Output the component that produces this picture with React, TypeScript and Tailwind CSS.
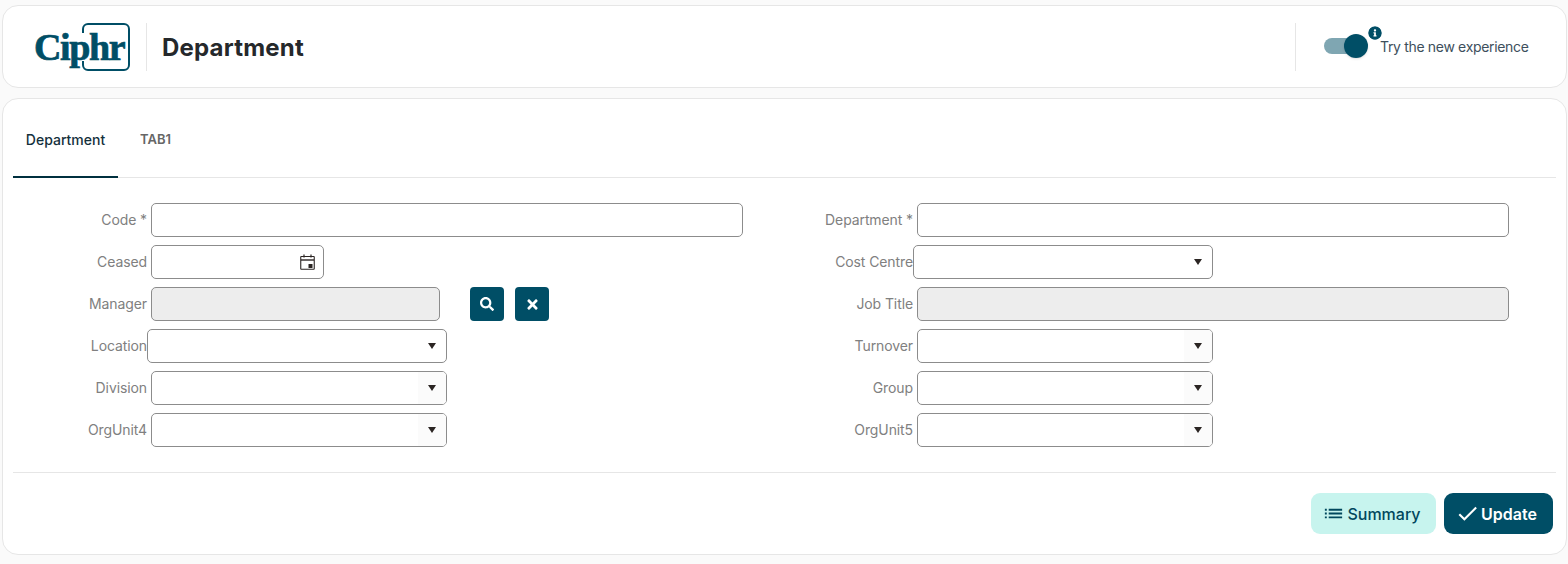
import { FaInfoCircle, FaSearch, FaTimes } from 'react-icons/fa';
import { MdCheck, MdList } from 'react-icons/md';

const FIELD = 'h-[34px] rounded-[5px] border border-[#8c8c8c] bg-white outline-none';

function Arrow() {
  return (
    <svg className="absolute right-[10px] top-[13px] h-[6px] w-[8px] text-[#2b2523]" viewBox="0 0 8 6" aria-hidden="true">
      <path d="M0 0h8L4 6z" fill="currentColor" />
    </svg>
  );
}

function CalendarIcon() {
  return (
    <svg className="h-[16px] w-[15px] text-[#2b2523]" viewBox="0 0 15 16" fill="none" stroke="currentColor" aria-hidden="true">
      <rect x="0.75" y="2.5" width="13.5" height="12.75" rx="0.5" strokeWidth="1.1" />
      <path d="M1 6h13" strokeWidth="1.4" />
      <path d="M4 0.5v3M11 0.5v3" strokeWidth="1.2" />
      <rect x="8.5" y="10" width="4" height="4" fill="currentColor" stroke="none" />
    </svg>
  );
}

function Select({ className, shaded }: { className: string; shaded?: boolean }) {
  return (
    <div className={`relative overflow-hidden ${FIELD} ${className}`}>
      {shaded && <div className="absolute inset-y-0 right-0 w-[28px] bg-[#fbfbfb]" />}
      <Arrow />
    </div>
  );
}

function Row({ label, children }: { label: string; children: React.ReactNode }) {
  return (
    <div className="flex h-[34px] items-center">
      <label className="w-[134px] shrink-0 pb-[2px] text-right text-[14px] tracking-[-0.1px] text-[#808080]">{label}</label>
      {children}
    </div>
  );
}

function Logo() {
  return (
    <div className="relative h-[48px] w-[95px]">
      <svg className="absolute left-[47px] top-0 h-[48px] w-[48px] text-[#004e66]" viewBox="0 0 48 48" fill="none" aria-hidden="true">
        <path d="M1 10V6a5 5 0 0 1 5-5h36a5 5 0 0 1 5 5v36a5 5 0 0 1-5 5H6a5 5 0 0 1-5-5v-4" stroke="currentColor" strokeWidth="2" />
      </svg>
      <span className="absolute -left-px top-0 font-['Liberation_Serif',serif] text-[38px] font-bold leading-[48px] tracking-[-1.4px] text-[#004e66] [-webkit-text-stroke:0.7px_#004e66]">
        Ciphr
      </span>
    </div>
  );
}

export default function App() {
  return (
    <div className="h-[564px] w-[1568px] overflow-hidden bg-[#fafafa] pl-[2px] pr-px pt-[5px] font-['Inter',sans-serif]">
      <header className="flex h-[83px] items-center rounded-[16px] border border-[#e6e6e6] bg-white pl-[32px] pr-[36px]">
        <Logo />
        <div className="ml-[16px] h-[48px] w-px bg-[#e6e6e6]" />
        <h1 className="ml-[15px] pt-[2px] text-[24px] font-bold tracking-[0.2px] text-[#25282b]">Department</h1>
        <div className="ml-auto h-[48px] w-px bg-[#e6e6e6]" />
        <div className="relative ml-[28px] h-[48px] w-[206px]">
          <div className="absolute left-0 top-[15px] h-[16px] w-[36px] rounded-full bg-[#7fa6b2]" />
          <div className="absolute left-[20px] top-[11px] h-[24px] w-[24px] rounded-full bg-[#004e66] shadow-sm" />
          <FaInfoCircle className="absolute left-[44px] top-[3px] h-[14px] w-[14px] rounded-full bg-white text-[#004e66]" />
          <span className="absolute left-[56px] top-[13px] whitespace-nowrap text-[14px] tracking-[-0.33px] text-[#3d4f5c]">
            Try the new experience
          </span>
        </div>
      </header>

      <main className="mt-[10px] h-[457px] rounded-[16px] border border-[#e6e6e6] bg-white px-[10px]">
        <nav className="flex h-[79px] border-b border-[#e6e6e6]">
          <div className="flex h-[79px] w-[105px] items-center justify-center border-b-2 border-[#00303f] pt-[3px] text-[14px] font-medium text-[#14303c]">
            Department
          </div>
          <div className="ml-[22px] flex h-[79px] items-center pt-[3px] text-[13px] font-semibold text-[#666666]">TAB1</div>
        </nav>

        <section className="mt-[25px] flex">
          <div className="flex w-[766px] flex-col gap-[8px]">
            <Row label="Code *">
              <input className={`ml-[4px] w-[592px] ${FIELD}`} />
            </Row>
            <Row label="Ceased">
              <div className={`relative ml-[4px] flex w-[173px] items-center justify-end pr-[8px] ${FIELD}`}>
                <CalendarIcon />
              </div>
            </Row>
            <Row label="Manager">
              <input disabled className={`ml-[4px] w-[289px] ${FIELD} !bg-[#ededed]`} />
              <button className="ml-[30px] flex h-[34px] w-[34px] items-center justify-center rounded-[4px] bg-[#004e66] text-white">
                <FaSearch className="h-[14px] w-[14px]" />
              </button>
              <button className="ml-[11px] flex h-[34px] w-[34px] items-center justify-center rounded-[4px] bg-[#004e66] text-white">
                <FaTimes className="h-[15px] w-[15px]" />
              </button>
            </Row>
            <Row label="Location">
              <Select className="w-[300px]" />
            </Row>
            <Row label="Division">
              <Select className="ml-[4px] w-[296px]" shaded />
            </Row>
            <Row label="OrgUnit4">
              <Select className="ml-[4px] w-[296px]" shaded />
            </Row>
          </div>
          <div className="flex flex-col gap-[8px]">
            <Row label="Department *">
              <input className={`ml-[4px] w-[592px] ${FIELD}`} />
            </Row>
            <Row label="Cost Centre">
              <Select className="w-[300px]" />
            </Row>
            <Row label="Job Title">
              <input disabled className={`ml-[4px] w-[592px] ${FIELD} !bg-[#ededed]`} />
            </Row>
            <Row label="Turnover">
              <Select className="ml-[4px] w-[296px]" shaded />
            </Row>
            <Row label="Group">
              <Select className="ml-[4px] w-[296px]" shaded />
            </Row>
            <Row label="OrgUnit5">
              <Select className="ml-[4px] w-[296px]" shaded />
            </Row>
          </div>
        </section>

        <footer className="mt-[25px] flex justify-end gap-[8px] border-t border-[#e6e6e6] pr-[3px] pt-[20px]">
          <button className="flex h-[41px] w-[125px] items-center justify-center gap-[2px] rounded-[9px] bg-[#c7f4ee] pr-[4px] text-[16px] font-medium text-[#00475d]">
            <MdList className="h-[23px] w-[23px]" />
            Summary
          </button>
          <button className="flex h-[41px] w-[109px] items-center justify-center gap-px rounded-[9px] bg-[#004e66] pr-[5px] text-[16px] font-semibold text-white">
            <MdCheck className="h-[25px] w-[25px]" />
            Update
          </button>
        </footer>
      </main>
    </div>
  );
}
